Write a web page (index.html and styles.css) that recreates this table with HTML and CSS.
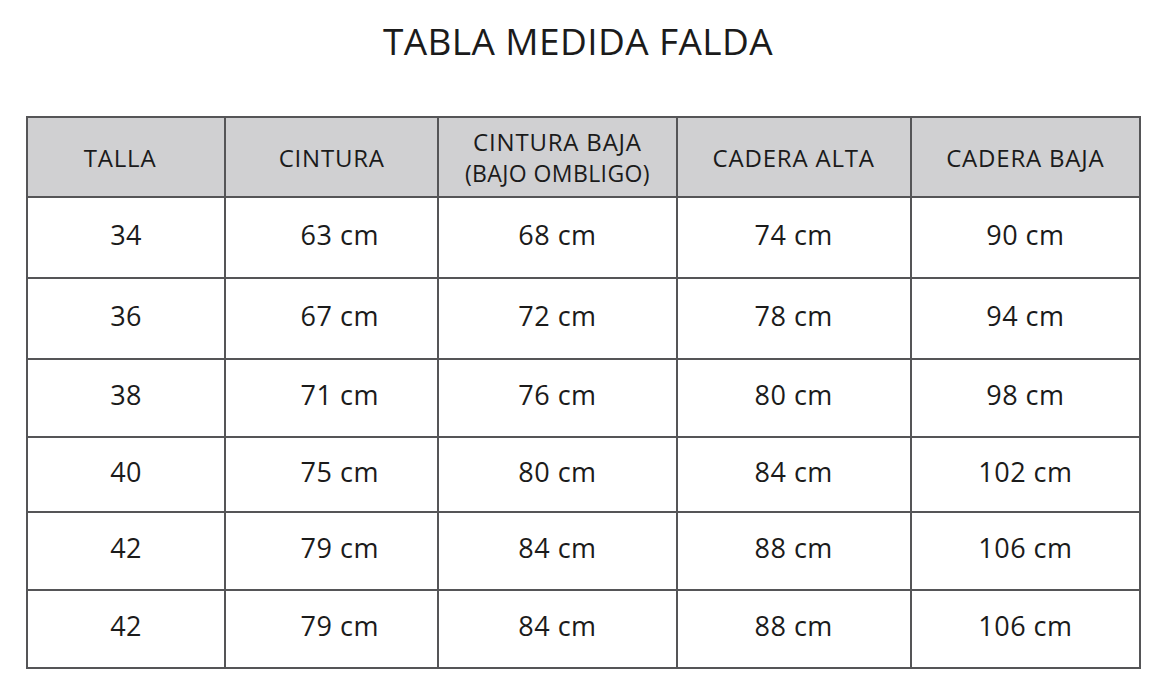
FILE: index.html
```html
<!DOCTYPE html>
<html lang="es">
<head>
<meta charset="utf-8">
<title>Tabla medida falda</title>
<link rel="stylesheet" href="styles.css">
</head>
<body>
<main class="page">
  <h1 class="title">TABLA MEDIDA FALDA</h1>
  <table class="sizes">
    <colgroup>
      <col class="c1"><col class="c2"><col class="c3"><col class="c4"><col class="c5">
    </colgroup>
    <thead>
      <tr class="r-head">
        <th class="talla">TALLA</th>
        <th>CINTURA</th>
        <th>CINTURA BAJA<br><span class="sub">(BAJO OMBLIGO)</span></th>
        <th>CADERA ALTA</th>
        <th>CADERA BAJA</th>
      </tr>
    </thead>
    <tbody>
      <tr class="r1"><td>34</td><td class="shift">63 cm</td><td>68 cm</td><td>74 cm</td><td>90 cm</td></tr>
      <tr class="r2"><td>36</td><td class="shift">67 cm</td><td>72 cm</td><td>78 cm</td><td>94 cm</td></tr>
      <tr class="r3"><td>38</td><td class="shift">71 cm</td><td>76 cm</td><td>80 cm</td><td>98 cm</td></tr>
      <tr class="r4"><td>40</td><td class="shift">75 cm</td><td>80 cm</td><td>84 cm</td><td>102 cm</td></tr>
      <tr class="r5"><td>42</td><td class="shift">79 cm</td><td>84 cm</td><td>88 cm</td><td>106 cm</td></tr>
      <tr class="r6"><td>42</td><td class="shift">79 cm</td><td>84 cm</td><td>88 cm</td><td>106 cm</td></tr>
    </tbody>
  </table>
</main>
</body>
</html>
```

FILE: styles.css
```css
html, body {
  margin: 0;
  padding: 0;
  background: #ffffff;
}

.page {
  width: 1170px;
  height: 691px;
  overflow: hidden;
  font-family: "Open Sans", "Liberation Sans", sans-serif;
  color: #1b1b1b;
}

.title {
  margin: 17px 0 51px 0;
  padding-right: 14px;
  font-size: 37px;
  line-height: 48px;
  font-weight: 400;
  text-align: center;
  letter-spacing: 0.4px;
}

.sizes {
  margin-left: 26px;
  width: 1115px;
  border-collapse: collapse;
  table-layout: fixed;
}

.c1 { width: 198px; }
.c2 { width: 213px; }
.c3 { width: 238px; }
.c4 { width: 234px; }
.c5 { width: 229px; }

.sizes th,
.sizes td {
  border: 2px solid #555557;
  text-align: center;
  vertical-align: middle;
  padding: 0;
}

.sizes th {
  background: #d0d0d2;
  font-weight: 400;
  font-size: 24px;
  line-height: 31px;
  letter-spacing: 0.8px;
}

.sizes th .sub {
  font-size: 23px;
  letter-spacing: 0.4px;
}

.sizes td {
  font-size: 27px;
  line-height: 30px;
  letter-spacing: 0.5px;
  padding-bottom: 6px;
}

.sizes th.talla {
  padding-right: 12px;
}

.sizes td.shift {
  padding-left: 16px;
}

.r-head { height: 80px; }
.r1 { height: 81px; }
.r2 { height: 81px; }
.r3 { height: 78px; }
.r4 { height: 75px; }
.r5 { height: 78px; }
.r6 { height: 78px; }
```
